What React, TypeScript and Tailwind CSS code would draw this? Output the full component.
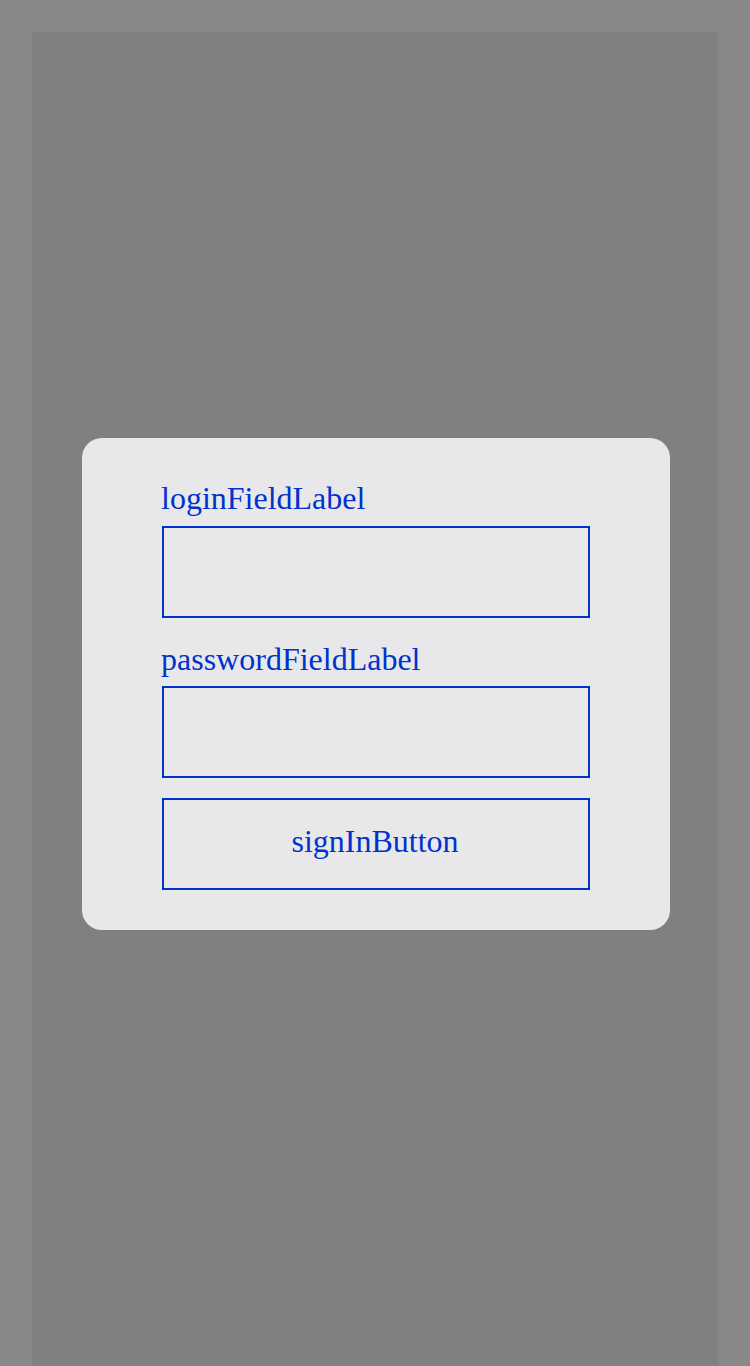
import React from "react";

export default function App() {
  return (
    <div className="min-h-screen bg-[#888888] px-8 pt-8" style={{ fontFamily: '"Liberation Serif", "Times New Roman", serif' }}>
      <div className="h-[1334px] pb-[30px] bg-[#808080] flex items-center justify-center">
        <div className="ml-[2px] w-[588px] rounded-[20px] bg-[#e8e8eb] px-[80px] py-[40px] flex flex-col text-[#0033cc]">
          <label className="text-[32px] leading-[36px] pt-[2px] mb-[10px] -ml-px">loginFieldLabel</label>
          <input className="h-[92px] w-full border-2 border-[#0033cc] bg-transparent outline-none" />
          <label className="text-[32px] leading-[36px] mt-[22px] pt-[1px] mb-[9px] -ml-px">passwordFieldLabel</label>
          <input type="password" className="h-[92px] w-full border-2 border-[#0033cc] bg-transparent outline-none" />
          <button className="mt-[20px] h-[92px] w-full border-2 border-[#0033cc] pb-[6px] pr-[2px] text-[32px] leading-[36px] text-[#0033cc]">
            signInButton
          </button>
        </div>
      </div>
    </div>
  );
}
